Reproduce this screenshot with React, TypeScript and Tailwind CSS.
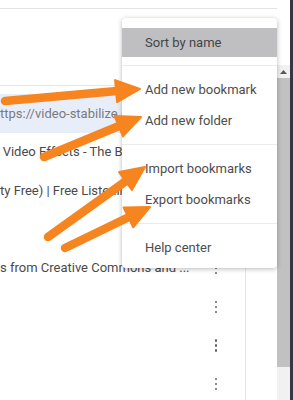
import React from "react";

const font = { fontFamily: "Roboto, 'Liberation Sans', sans-serif" };

function Kebab() {
  return (
    <div className="w-[24px] flex flex-col items-center gap-[2.5px] mr-[17px] shrink-0">
      <span className="w-[2.5px] h-[2.5px] rounded-full bg-[#5f6368]" />
      <span className="w-[2.5px] h-[2.5px] rounded-full bg-[#5f6368]" />
      <span className="w-[2.5px] h-[2.5px] rounded-full bg-[#5f6368]" />
    </div>
  );
}

type Row = { text: string; offset?: string; blue?: boolean };

const rows: Row[] = [
  { text: "ttps://video-stabilize.com/", blue: true },
  { text: "r Video Effects - The Best Free Video Editor", offset: "ml-[-5px]" },
  { text: "ty Free) | Free Listening and Download" },
  { text: "" },
  { text: "s from Creative Commons and ..." },
  { text: "" },
  { text: "" },
  { text: "" },
];

function Arrow({ d, head }: { d: string; head: string }) {
  return (
    <g>
      <path d={d} stroke="#f6841f" strokeWidth="8.5" strokeLinecap="round" fill="none" />
      <polygon points={head} fill="#f6841f" stroke="#f6841f" strokeWidth="2" strokeLinejoin="round" />
    </g>
  );
}

export default function App() {
  return (
    <div className="relative w-[293px] h-[400px] overflow-hidden bg-white flex" style={font}>
      {/* main */}
      <div className="w-[277px] flex flex-col">
        <div className="h-[9px] shrink-0 border-b border-[#e3e3e3]" />
        <div className="flex flex-1">
          <div className="w-[246px] mt-[76px] border-t border-r border-[#e6e6e6] pt-[8px] overflow-hidden">
            {rows.map((r, i) => (
              <div
                key={i}
                className={`h-[38.7px] flex items-center ${r.blue ? "bg-[#e7eefa]" : ""}`}
              >
                <div className="flex-1 min-w-0 overflow-hidden whitespace-nowrap">
                  <span
                    className={`block text-[13px] ${r.blue ? "text-[#7a7a7a]" : "text-[#4a4a4a]"} ${r.offset ?? ""}`}
                  >
                    {r.text}
                  </span>
                </div>
                {i >= 4 ? <Kebab /> : <div className="w-[24px] mr-[17px]" />}
              </div>
            ))}
          </div>
          <div className="flex-1" />
        </div>
      </div>

      {/* scrollbar */}
      <div className="w-[13px] flex flex-col pt-[65px]">
        <div className="h-[13px] bg-[#f1f1f1] flex items-center justify-center">
          <svg width="7" height="4" viewBox="0 0 7 4">
            <polygon points="0,4 3.5,0 7,4" fill="#5a5a5a" />
          </svg>
        </div>
        <div className="h-[289px] bg-[#c1c1c1]" />
        <div className="flex-1 bg-[#f1f1f1]" />
      </div>

      {/* dark edge */}
      <div className="w-[3px] bg-[#383645]" />

      {/* menu */}
      <div className="absolute left-[122px] top-[18px] w-[155px] bg-white rounded-[4px] shadow-[0_1px_5px_rgba(0,0,0,0.28)] pt-[10px] pb-[5px] text-[13px] text-[#4d4d4d]">
        <div className="h-[29px] bg-[#bfbfc2] flex items-center pl-[23px] text-[#444]">Sort by name</div>
        <div className="h-[8px]" />
        <div className="border-t border-[#ebebeb]" />
        <div className="py-[8px]">
          <div className="h-[31px] flex items-center pl-[23px]">Add new bookmark</div>
          <div className="h-[31px] flex items-center pl-[23px]">Add new folder</div>
        </div>
        <div className="border-t border-[#ebebeb]" />
        <div className="py-[8px]">
          <div className="h-[31px] flex items-center pl-[23px]">Import bookmarks</div>
          <div className="h-[31px] flex items-center pl-[23px]">Export bookmarks</div>
        </div>
        <div className="border-t border-[#ebebeb]" />
        <div className="pt-[8px]">
          <div className="h-[31px] flex items-center pl-[23px]">Help center</div>
        </div>
      </div>

      {/* arrows */}
      <svg className="absolute left-0 top-0" width="293" height="400" viewBox="0 0 293 400">
        <Arrow d="M5,101 L117,91" head="140,89 117.1,102.1 115.1,80.1" />
        <Arrow d="M44,157 L119,126" head="141,117 123,136.4 114.6,116" />
        <Arrow d="M48,237 L126,181" head="145,167 131.9,189.9 119.1,172.1" />
        <Arrow d="M65,248 L129,217" head="150,207 133.2,227.3 123.6,207.5" />
      </svg>
    </div>
  );
}
